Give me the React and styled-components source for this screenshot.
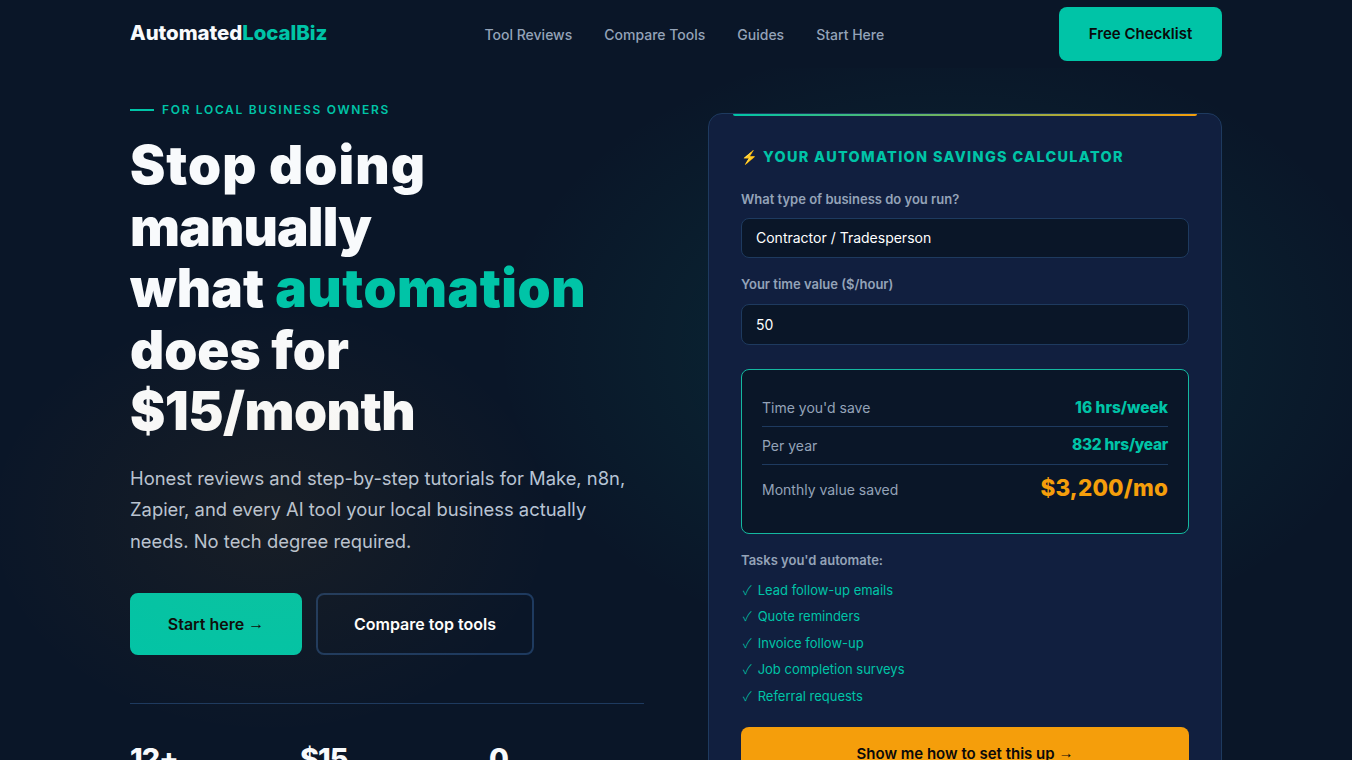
import React, { useState } from "react";
import styled, { createGlobalStyle } from "styled-components";

const GlobalStyle = createGlobalStyle`
  * {
    box-sizing: border-box;
    margin: 0;
    padding: 0;
  }
  body {
    background-color: #0a1628;
    font-family: Inter, "Liberation Sans", sans-serif;
    color: #f8fafc;
    overflow: hidden;
  }
`;
const Page = styled.div`
  width: 100%;
  height: 760px;
  overflow: hidden;
`;
const Nav = styled.nav`
  width: 1092px;
  height: 68px;
  margin: 0 auto;
  display: flex;
  align-items: center;
`;
const Logo = styled.div`
  width: 354.5px;
  font-size: 20.4px;
  font-weight: 800;
  line-height: 24px;
  letter-spacing: -0.05px;
  white-space: nowrap;
  padding-bottom: 2px;
`;
const Accent = styled.span`
  color: #00c4a7;
`;
const NavLinks = styled.div`
  display: flex;
  gap: 32px;
  flex: 1;
  padding-top: 2px;
`;
const NavLink = styled.a`
  color: #94a3b8;
  font-size: 14px;
  font-weight: 500;
  line-height: 20px;
  white-space: nowrap;
`;
const NavButton = styled.button`
  width: 163px;
  height: 54px;
  padding-bottom: 2px;
  border: none;
  border-radius: 8px;
  background-color: #00c4a7;
  color: #0a0a0a;
  font-family: inherit;
  font-size: 15px;
  font-weight: 600;
`;
const Hero = styled.section`
  position: relative;
  height: 692px;
`;
const Glow = styled.div`
  position: absolute;
  inset: 0;
  pointer-events: none;
  background:
    radial-gradient(ellipse 450px 310px at 946px 280px, rgba(0, 196, 167, 0.12), transparent),
    radial-gradient(ellipse 285px 215px at 270px 452px, rgba(245, 158, 11, 0.06), transparent);
`;
const HeroGrid = styled.div`
  width: 1092px;
  margin: 0 auto;
  display: grid;
  grid-template-columns: 514px 514px;
  column-gap: 64px;
`;
const Intro = styled.div`
  padding-top: 33px;
`;
const Eyebrow = styled.div`
  display: flex;
  align-items: center;
  gap: 8px;
  height: 16px;
  color: #00c4a7;
  font-size: 12px;
  font-weight: 600;
  letter-spacing: 1.68px;
  white-space: nowrap;
`;
const Dash = styled.span`
  width: 24px;
  height: 2px;
  margin-top: 2px;
  background-color: #00c4a7;
`;
const Title = styled.h1`
  margin-top: 18px;
  font-size: 53px;
  font-weight: 900;
  line-height: 61.5px;
  white-space: nowrap;
`;
const TitleWord = styled.span`
  letter-spacing: ${(props) => props.$spacing}px;
  color: ${(props) => (props.$accent ? "#00c4a7" : "inherit")};
`;
const Lead = styled.p`
  margin-top: 20px;
  color: #b8c4d6;
  font-size: 18.4px;
  line-height: 31.5px;
  white-space: nowrap;
`;
const Actions = styled.div`
  display: flex;
  gap: 14px;
  margin-top: 36px;
`;
const ActionButton = styled.button`
  width: ${(props) => props.$width}px;
  height: 62px;
  border: 2px solid ${(props) => (props.$primary ? "#00c4a7" : "#1e3a5f")};
  border-radius: 8px;
  background-color: ${(props) => (props.$primary ? "#00c4a7" : "transparent")};
  color: ${(props) => (props.$primary ? "#0a0a0a" : "#ffffff")};
  font-family: inherit;
  font-size: 16px;
  font-weight: 600;
  line-height: 20px;
`;
const Arrow = styled.span`
  font-family: "Liberation Sans", sans-serif;
  font-weight: 400;
  line-height: 0;
  vertical-align: 1px;
`;
const Stats = styled.div`
  display: grid;
  grid-template-columns: 170px 189px 1fr;
  margin-top: 48px;
  padding-top: 37px;
  border-top: 1px solid #1e3a5f;
`;
const Stat = styled.div`
  font-size: 28.8px;
  font-weight: 800;
  line-height: 36px;
  letter-spacing: -1px;
`;
const Card = styled.div`
  position: relative;
  z-index: 1;
  height: 720px;
  margin-top: 45px;
  padding: 0 32px;
  border: 1px solid #1e3a5f;
  border-radius: 14px;
  background-color: #111f3f;
`;
const CardStripe = styled.div`
  position: absolute;
  top: 0;
  left: 24px;
  right: 24px;
  height: 2px;
  border-radius: 0 0 2px 2px;
  background: linear-gradient(90deg, #00c4a7, #f59e0b);
`;
const CardTitle = styled.h2`
  margin-top: 33px;
  color: #00c4a7;
  font-size: 14.4px;
  font-weight: 800;
  line-height: 20px;
  letter-spacing: 1.34px;
  white-space: pre;
`;
const Bolt = styled.span`
  font-size: 13.4px;
  letter-spacing: 1px;
`;
const Label = styled.label`
  display: block;
  margin-top: ${(props) => props.$top}px;
  color: #94a3b8;
  font-size: 13px;
  font-weight: 600;
  line-height: 16px;
`;
const Input = styled.input`
  display: block;
  width: 100%;
  height: ${(props) => props.$height}px;
  margin-top: ${(props) => props.$top}px;
  padding: 0 14px ${(props) => props.$lift || 0}px;
  border: 1px solid #1e3a5f;
  border-radius: 8px;
  background-color: #0a1628;
  color: #ffffff;
  font-family: inherit;
  font-size: 14px;
  outline: none;
`;
const Results = styled.div`
  height: 165px;
  margin-top: 24px;
  padding: 20px 20px 0;
  border: 1px solid #14b8a0;
  border-radius: 8px;
  background-color: #0a1628;
`;
const ResultRow = styled.div`
  display: flex;
  justify-content: space-between;
  align-items: flex-end;
  height: ${(props) => props.$height}px;
  padding-bottom: 8px;
  border-bottom: ${(props) => (props.$last ? "none" : "1px solid #1e3a5f")};
`;
const ResultName = styled.span`
  margin-bottom: ${(props) => props.$lift || 0}px;
  color: #94a3b8;
  font-size: 14px;
  line-height: 20px;
`;
const ResultValue = styled.span`
  margin-bottom: ${(props) => props.$lift || 0}px;
  color: ${(props) => (props.$big ? "#f59e0b" : "#00c4a7")};
  font-size: ${(props) => (props.$big ? 22.4 : 15.5)}px;
  font-weight: 800;
  line-height: ${(props) => (props.$big ? 26 : 20)}px;
  letter-spacing: ${(props) => props.$spacing}px;
`;
const TaskList = styled.ul`
  margin-top: 8.7px;
  list-style: none;
`;
const Task = styled.li`
  height: 26.5px;
  color: #00c4a7;
  font-size: 13px;
  line-height: 26.5px;
  white-space: nowrap;
`;
const Check = styled.span`
  display: inline-block;
  width: 13px;
  padding-left: 2px;
  font-family: "Noto Sans CJK JP", sans-serif;
  font-weight: 300;
  line-height: 0;
`;
const CardButton = styled.button`
  width: 100%;
  height: 54px;
  margin-top: 17.8px;
  border: none;
  border-radius: 8px;
  background-color: #f59e0b;
  color: #0a0a0a;
  font-family: inherit;
  font-size: 15px;
  font-weight: 600;
  line-height: 20px;
`;

const links = ["Tool Reviews", "Compare Tools", "Guides", "Start Here"];
const stats = ["12+", "$15", "0"];
const tasks = [
  "Lead follow-up emails",
  "Quote reminders",
  "Invoice follow-up",
  "Job completion surveys",
  "Referral requests",
];

function App() {
  const [business, setBusiness] = useState("Contractor / Tradesperson");
  const [rate, setRate] = useState("50");
  const monthly = (Number(rate) * 64).toLocaleString("en-US");

  return (
    <Page>
      <GlobalStyle />
      <Nav>
        <Logo>
          Automated<Accent>LocalBiz</Accent>
        </Logo>
        <NavLinks>
          {links.map((link) => (
            <NavLink key={link}>{link}</NavLink>
          ))}
        </NavLinks>
        <NavButton>Free Checklist</NavButton>
      </Nav>
      <Hero>
        <HeroGrid>
          <Intro>
            <Eyebrow>
              <Dash />
              FOR LOCAL BUSINESS OWNERS
            </Eyebrow>
            <Title>
              <TitleWord $spacing={1.05}>Stop doing</TitleWord>
              <br />
              <TitleWord $spacing={-0.85}>manually</TitleWord>
              <br />
              <TitleWord $spacing={0.2}>what </TitleWord>
              <TitleWord $spacing={0.5} $accent>
                automation
              </TitleWord>
              <br />
              <TitleWord $spacing={0}>does for</TitleWord>
              <br />
              <TitleWord $spacing={-0.5}>$15/month</TitleWord>
            </Title>
            <Lead>
              Honest reviews and step-by-step tutorials for Make, n8n,
              <br />
              Zapier, and every AI tool your local business actually
              <br />
              needs. No tech degree required.
            </Lead>
            <Actions>
              <ActionButton $primary $width={172}>
                Start here <Arrow>→</Arrow>
              </ActionButton>
              <ActionButton $width={218}>Compare top tools</ActionButton>
            </Actions>
            <Stats>
              {stats.map((stat) => (
                <Stat key={stat}>{stat}</Stat>
              ))}
            </Stats>
          </Intro>
          <Card>
            <CardStripe />
            <CardTitle>
              <Bolt>⚡ </Bolt>YOUR AUTOMATION SAVINGS CALCULATOR
            </CardTitle>
            <Label $top={24}>What type of business do you run?</Label>
            <Input
              $height={40}
              $top={11}
              $lift={2}
              value={business}
              onChange={(e) => {
                setBusiness(e.target.value);
              }}
            />
            <Label $top={18}>Your time value ($/hour)</Label>
            <Input
              $height={41}
              $top={12}
              value={rate}
              onChange={(e) => {
                setRate(e.target.value);
              }}
            />
            <Results>
              <ResultRow $height={37}>
                <ResultName>Time you'd save</ResultName>
                <ResultValue $spacing={0}>16 hrs/week</ResultValue>
              </ResultRow>
              <ResultRow $height={38}>
                <ResultName>Per year</ResultName>
                <ResultValue $spacing={-0.3} $lift={1}>
                  832 hrs/year
                </ResultValue>
              </ResultRow>
              <ResultRow $height={44} $last>
                <ResultName $lift={1}>Monthly value saved</ResultName>
                <ResultValue $big $spacing={0.2}>
                  ${monthly}/mo
                </ResultValue>
              </ResultRow>
            </Results>
            <Label $top={18}>Tasks you'd automate:</Label>
            <TaskList>
              {tasks.map((task) => (
                <Task key={task}>
                  <Check>✓</Check> {task}
                </Task>
              ))}
            </TaskList>
            <CardButton>
              Show me how to set this up <Arrow>→</Arrow>
            </CardButton>
          </Card>
        </HeroGrid>
        <Glow />
      </Hero>
    </Page>
  );
}

export default App;
